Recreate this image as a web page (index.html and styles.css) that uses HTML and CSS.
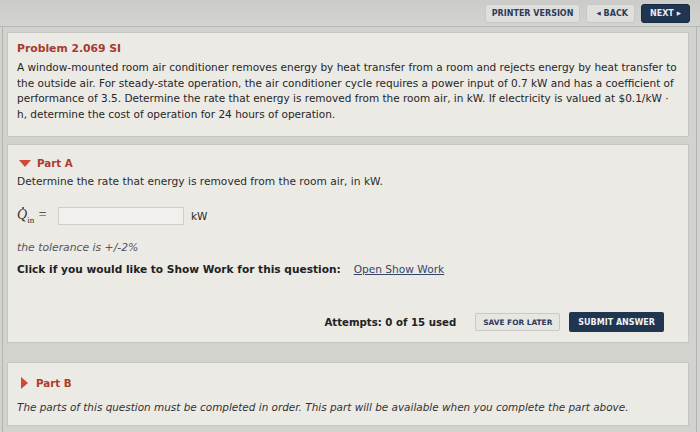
FILE: index.html
```html
<!DOCTYPE html>
<html>
<head>
<meta charset="utf-8">
<link rel="stylesheet" href="styles.css">
</head>
<body>
<div class="topbar">
  <a class="tbtn light">PRINTER VERSION</a>
  <a class="tbtn light"><span class="arr">&#9664;</span>BACK</a>
  <a class="tbtn dark">NEXT<span class="arr">&#9654;</span></a>
</div>
<div class="frame">
  <section class="panel problem">
    <h1 class="ptitle">Problem 2.069 SI</h1>
    <p class="ptext">A window-mounted room air conditioner removes energy by heat transfer from a room and rejects energy by heat transfer to the outside air. For steady-state operation, the air conditioner cycle requires a power input of 0.7 kW and has a coefficient of performance of 3.5. Determine the rate that energy is removed from the room air, in kW. If electricity is valued at $0.1/kW &middot; h, determine the cost of operation for 24 hours of operation.</p>
  </section>
  <section class="panel parta">
    <div class="parthead"><span class="tri-down"></span>Part A</div>
    <p class="qtext">Determine the rate that energy is removed from the room air, in kW.</p>
    <div class="answer">
      <span class="qvar"><span class="qdot">Q</span><sub>in</sub> =</span>
      <span class="inbox"></span>
      <span class="unit">kW</span>
    </div>
    <p class="tol">the tolerance is +/-2%</p>
    <p class="showwork">Click if you would like to Show Work for this question:<a class="swlink">Open Show Work</a></p>
    <div class="actions">
      <span class="attempts">Attempts: 0 of 15 used</span>
      <a class="btn save">SAVE FOR LATER</a>
      <a class="btn submit">SUBMIT ANSWER</a>
    </div>
  </section>
  <section class="panel partb">
    <div class="parthead"><span class="tri-right"></span>Part B</div>
    <p class="locked">The parts of this question must be completed in order. This part will be available when you complete the part above.</p>
  </section>
</div>
</body>
</html>
```
FILE: styles.css
```css
* { box-sizing: border-box; }
html, body { margin: 0; padding: 0; }
body {
  width: 700px;
  height: 432px;
  overflow: hidden;
  background: #d2d2cf;
  font-family: "DejaVu Sans", Verdana, sans-serif;
  color: #2a2a2a;
}
.topbar {
  height: 27px;
  display: flex;
  justify-content: flex-end;
  align-items: center;
  gap: 6px;
  padding: 0 10px 0 0;
  background: linear-gradient(#cbcbc9, #d3d3d1);
  border-bottom: 1px solid #b9b9b6;
}
.tbtn {
  display: flex;
  align-items: center;
  height: 19px;
  padding: 0 6px;
  font-size: 8px;
  font-weight: bold;
  border-radius: 3px;
}
.tbtn.light { background: #dfdfdc; color: #2d3a5c; border: 1px solid #c8c8c5; }
.tbtn.dark { background: #1f3550; color: #e8ecf2; border: 1px solid #162a40; padding: 0 5px 0 8px; }
.arr { font-size: 5.5px; margin: 0 3px; }
.frame {
  margin: 0 3px 0 2px;
  padding: 5px 7px 0 4px;
  border-left: 1px solid #b3b3b0;
  border-right: 1px solid #b3b3b0;
  height: 405px;
}
.panel {
  background: #ebeae5;
  border: 1px solid #c5c5c1;
  padding: 8px 9px 0 9px;
}
.problem { height: 105px; padding-top: 9px; }
.ptitle {
  margin: 0 0 5px;
  font-size: 10.8px;
  font-weight: bold;
  color: #a83a30;
}
.ptext {
  margin: 0;
  font-size: 10.5px;
  line-height: 15.6px;
  color: #262626;
}
.parta { margin-top: 7px; height: 199px; padding-top: 11px; }
.parthead {
  display: flex;
  align-items: center;
  font-size: 10.3px;
  font-weight: bold;
  color: #ad3a2e;
  height: 14px;
}
.tri-down {
  width: 0; height: 0;
  border-left: 6px solid transparent;
  border-right: 6px solid transparent;
  border-top: 7px solid #cf4a35;
  margin: 0 6px 0 2px;
}
.tri-right {
  width: 0; height: 0;
  border-top: 6px solid transparent;
  border-bottom: 6px solid transparent;
  border-left: 7px solid #cf4a35;
  margin: 0 8px 0 4px;
}
.qtext { margin: 5px 0 0; font-size: 10.65px; line-height: 14px; }
.answer {
  display: flex;
  align-items: center;
  margin-top: 18px;
  height: 18px;
}
.qvar {
  font-family: "Liberation Serif", "DejaVu Serif", serif;
  font-style: italic;
  font-size: 14px;
  color: #333;
  width: 41px;
}
.qvar sub { font-style: normal; font-size: 9px; }
.qdot { position: relative; }
.qdot::before {
  content: "";
  position: absolute;
  left: 5px; top: 0px;
  width: 2px; height: 2px;
  background: #333;
  border-radius: 50%;
}
.inbox {
  width: 126px;
  height: 18px;
  background: #f1f0ec;
  border: 1px solid #cfcfcb;
}
.unit { font-size: 10.5px; margin-left: 7px; }
.tol {
  margin: 16px 0 0;
  font-size: 10.8px;
  font-style: italic;
  color: #555;
}
.showwork {
  margin: 9px 0 0;
  font-size: 10.6px;
  font-weight: bold;
  color: #222;
}
.swlink {
  margin-left: 13px;
  font-weight: normal;
  color: #34476a;
  text-decoration: underline;
}
.actions {
  display: flex;
  justify-content: flex-end;
  align-items: center;
  margin-top: 37px;
  padding-right: 15px;
}
.attempts { font-size: 10.2px; font-weight: bold; color: #222; margin-right: 19px; }
.btn {
  display: flex;
  align-items: center;
  height: 18px;
  padding: 0 7px;
  font-size: 7.4px;
  font-weight: bold;
  border-radius: 2px;
}
.btn.save { background: #e6e6e2; color: #2d3a5c; border: 1px solid #c9c9c5; margin-right: 9px; }
.btn.submit { background: #1f3550; color: #f0f2f5; height: 20px; padding: 0 9px; font-size: 8px; }
.partb { margin-top: 19px; height: 64px; padding-top: 13px; }
.locked {
  margin: 11px 0 0;
  font-size: 10.45px;
  font-style: italic;
  color: #333;
}
```
